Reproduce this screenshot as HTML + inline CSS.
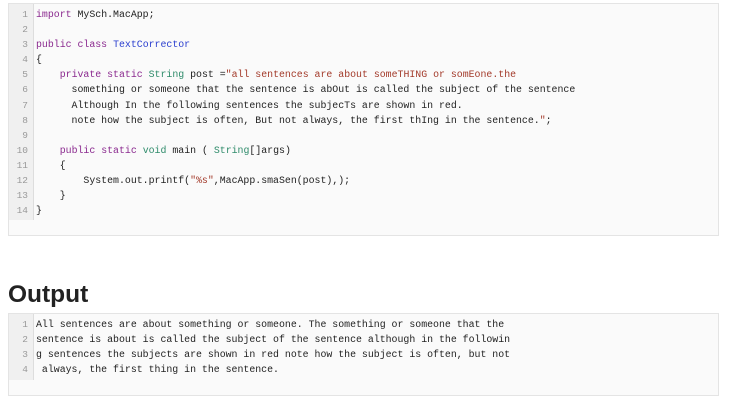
<!DOCTYPE html>
<html><head><meta charset="utf-8"><style>
body{margin:0;background:#fff;width:736px;height:408px;position:relative;overflow:hidden;font-family:"Liberation Sans",sans-serif}
.box{position:absolute;left:8px;width:711px;background:#fafafa;border:1px solid #e4e4e4;box-sizing:border-box}
.gut{position:absolute;left:0;top:0;width:24px;background:#f0f0f0;border-right:1px solid #ddd}
pre{margin:0;position:absolute;left:0;top:0;font-family:"Liberation Mono",monospace;font-size:9.9px;line-height:15.1px;color:#222}
.n{position:absolute;left:0;width:19px;text-align:right;color:#999;font-family:"Liberation Mono",monospace;font-size:9.5px;line-height:15.1px;margin:0;top:0}
.k{color:#8b2a8f}.s{color:#a33a2a}.t{color:#2e8b6a}.c{color:#2b3fcf}
h1{position:absolute;left:8px;top:281px;margin:0;font-size:24.5px;font-weight:bold;color:#222}
</style></head><body>
<div class="box" style="top:3px;height:233px">
 <div class="gut" style="height:216px"></div>
 <pre class="n" style="top:3px">1
2
3
4
5
6
7
8
9
10
11
12
13
14</pre>
 <pre style="left:27px;top:3px"><span class="k">import</span> MySch.MacApp;

<span class="k">public class</span> <span class="c">TextCorrector</span>
{
    <span class="k">private static</span> <span class="t">String</span> post =<span class="s">"all sentences are about someTHING or somEone.the</span>
      something or someone that the sentence is abOut is called the subject of the sentence
      Although In the following sentences the subjecTs are shown in red.
      note how the subject is often, But not always, the first thIng in the sentence.<span class="s">"</span>;

    <span class="k">public static</span> <span class="t">void</span> main ( <span class="t">String</span>[]args)
    {
        System.out.printf(<span class="s">"%s"</span>,MacApp.smaSen(post),);
    }
}</pre>
</div>
<h1>Output</h1>
<div class="box" style="top:313px;height:83px">
 <div class="gut" style="height:66px"></div>
 <pre class="n" style="top:3px">1
2
3
4</pre>
 <pre style="left:27px;top:3px">All sentences are about something or someone. The something or someone that the
sentence is about is called the subject of the sentence although in the followin
g sentences the subjects are shown in red note how the subject is often, but not
 always, the first thing in the sentence.</pre>
</div>
</body></html>
